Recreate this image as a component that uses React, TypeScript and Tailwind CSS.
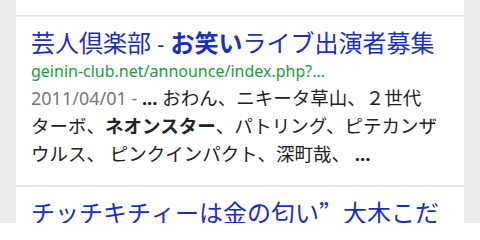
export default function App() {
  return (
    <div
      lang="ja"
      className="h-[223px] w-[480px] overflow-hidden bg-[#ececec] font-['Noto_Sans','Noto_Sans_CJK_JP',sans-serif] [line-break:strict]"
    >
      <div className="mx-4 flex flex-col gap-px">
        {/* previous result, scrolled off */}
        <div className="h-4 border-b border-[#e2e2e2] bg-white" />

        {/* result */}
        <div className="border-b border-[#e2e2e2] bg-white pl-[15px] pr-5 pt-[11px] pb-[17px]">
          <h3 className="whitespace-nowrap text-[24px] leading-[30px] text-[#1a2fbc]">
            芸人倶楽部 <span className="text-[22px]">-</span> <b className="font-bold">お笑い</b>ライブ出演者募集
          </h3>
          <div className="text-[16px] leading-[26px] text-[#1c9a3c]">
            geinin-club.net/announce/index.php?...
          </div>
          <p className="text-[18.5px] leading-[28px] text-[#222]">
            <span className="text-[18px] text-[#777]">2011/04/01 - </span>
            <b className="font-bold">...</b> おわん、ニキータ草山、２世代<span className="whitespace-nowrap">ターボ、</span>
            <b className="font-bold">ネオンスター</b>、パトリング、ピテカンザウルス、 ピンクインパクト、深町哉、 <b className="font-bold">...</b>
          </p>
        </div>

        {/* next result */}
        <div className="bg-white pl-[15px] pr-5 pt-[10px]">
          <h3 className="text-[24px] leading-[30px] text-[#1a2fbc]">
            チッチキチィーは金の匂い<span className="font-['Noto_Sans_CJK_JP',sans-serif] [font-feature-settings:'fwid']">”</span>大木こだま・ひびき
          </h3>
        </div>
      </div>
    </div>
  );
}
